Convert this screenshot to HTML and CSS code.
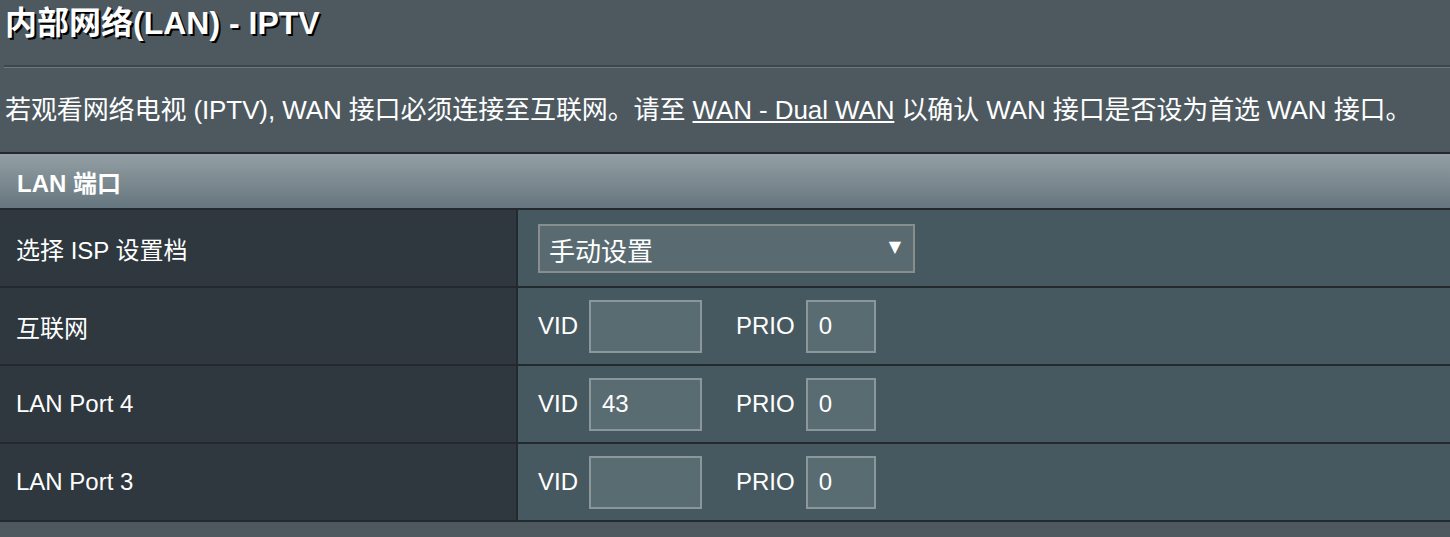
FILE: index.html
```html
<!DOCTYPE html>
<html lang="zh-CN">
<head>
<meta charset="utf-8">
<title>IPTV</title>
<link rel="stylesheet" href="styles.css">
</head>
<body>
<div class="page">
  <div class="title">内部网络(LAN) - IPTV</div>
  <div class="split"></div>
  <div class="desc">若观看网络电视 (IPTV), WAN 接口必须连接至互联网。请至 <a class="link" href="#">WAN - Dual WAN</a> 以确认 WAN 接口是否设为首选 WAN 接口。</div>
  <table class="form">
    <colgroup>
      <col class="col-label">
      <col class="col-field">
    </colgroup>
    <thead>
      <tr><th class="head" colspan="2">LAN 端口</th></tr>
    </thead>
    <tbody>
      <tr>
        <th class="label">选择 ISP 设置档</th>
        <td class="field">
          <div class="select"><span>手动设置</span><span class="arrow">▼</span></div>
        </td>
      </tr>
      <tr>
        <th class="label">互联网</th>
        <td class="field">
          <div class="pair">
            <span class="tag">VID</span><span class="input vid"></span>
            <span class="tag prio">PRIO</span><span class="input small">0</span>
          </div>
        </td>
      </tr>
      <tr>
        <th class="label">LAN Port 4</th>
        <td class="field">
          <div class="pair">
            <span class="tag">VID</span><span class="input vid">43</span>
            <span class="tag prio">PRIO</span><span class="input small">0</span>
          </div>
        </td>
      </tr>
      <tr>
        <th class="label">LAN Port 3</th>
        <td class="field">
          <div class="pair">
            <span class="tag">VID</span><span class="input vid"></span>
            <span class="tag prio">PRIO</span><span class="input small">0</span>
          </div>
        </td>
      </tr>
    </tbody>
  </table>
</div>
</body>
</html>
```

FILE: styles.css
```css
html, body {
  margin: 0;
  padding: 0;
  background: #4d595f;
}

body {
  font-family: "Liberation Sans", "Noto Sans CJK SC", sans-serif;
  color: #ffffff;
  overflow: hidden;
}

.page {
  width: 1450px;
}

.title {
  font-size: 32px;
  font-weight: bold;
  line-height: 40px;
  padding: 3px 0 0 5px;
  text-shadow: 2px 2px 0 #000;
}

.split {
  margin: 22px 0 0 4px;
  height: 2px;
  background: #3c464c;
  border-bottom: 1px solid #6b7a81;
}

.desc {
  font-size: 26px;
  line-height: 32px;
  padding: 26px 0 0 5px;
  height: 58px;
  letter-spacing: -0.1px;
}

.link {
  color: #ffffff;
  text-decoration: underline;
}

.form {
  border-collapse: collapse;
  width: 1450px;
  table-layout: fixed;
}

.col-label {
  width: 517px;
}

.form th, .form td {
  border: 2px solid #23292c;
  padding: 0;
}

.head {
  height: 54px;
  text-align: left;
  font-size: 24px;
  font-weight: bold;
  padding-left: 17px !important;
  background: linear-gradient(#939fa4, #66767e);
  border-left: none !important;
  border-right: none !important;
}

.label {
  height: 76px;
  text-align: left;
  font-weight: normal;
  font-size: 24px;
  padding-left: 16px !important;
  background: #2e383e;
  border-left: none !important;
}

.field {
  background: #475960;
  padding-left: 20px !important;
  border-right: none !important;
}

.select {
  box-sizing: border-box;
  width: 377px;
  height: 49px;
  border: 2px solid #888d8e;
  background: #596b71;
  display: flex;
  align-items: center;
  justify-content: space-between;
  padding: 2px 12px 0 9px;
  font-size: 26px;
}

.arrow {
  font-size: 16px;
  font-family: "DejaVu Sans", sans-serif;
  margin-bottom: 6px;
}

.pair {
  display: flex;
  align-items: center;
  font-size: 24px;
}

.tag {
  margin-right: 11px;
}

.prio {
  margin-left: 34px;
}

.input {
  box-sizing: border-box;
  height: 53px;
  border: 2px solid #8b979a;
  background: #596c72;
  display: flex;
  align-items: center;
  padding-left: 11px;
  font-size: 24px;
}

.vid {
  width: 113px;
}

.small {
  width: 70px;
}
```
